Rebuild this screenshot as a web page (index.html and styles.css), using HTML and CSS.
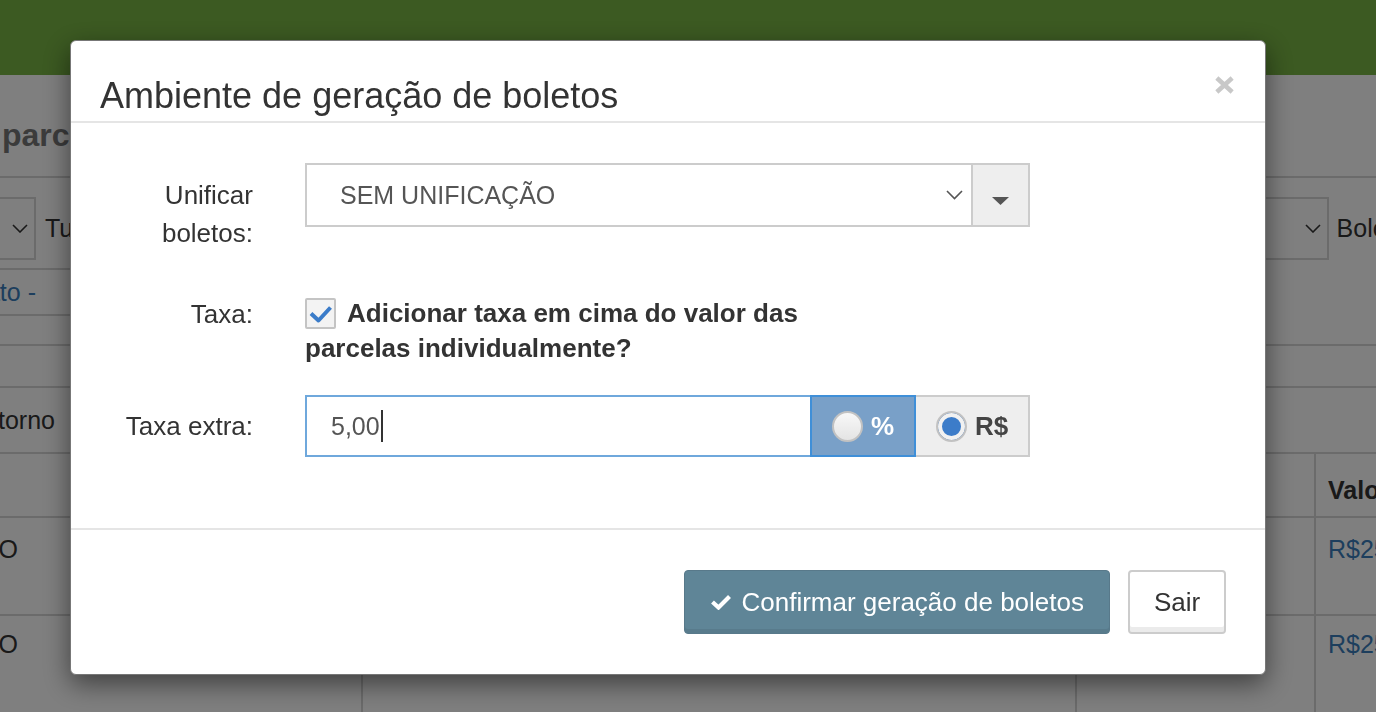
FILE: index.html
```html
<!DOCTYPE html>
<html lang="pt-BR">
<head>
    <meta charset="UTF-8">
    <meta name="viewport" content="width=device-width, initial-scale=1.0">
    <title>Boletos</title>
    <link rel="stylesheet" href="styles.css">
</head>
<body>
    <div class="page">
        <div class="topbar"></div>
        <h2 class="page-title">parcelas do contrato</h2>

        <div class="filters">
            <div class="filter-group first">
                <div class="filter-select">
                    <svg width="16" height="9" viewBox="0 0 16 9"><polyline points="1,1 8,8 15,1" fill="none" stroke="#333" stroke-width="1.6"/></svg>
                </div>
                <span>Tudo</span>
            </div>
            <div class="filter-group last">
                <div class="filter-select wide">
                    <svg width="16" height="9" viewBox="0 0 16 9"><polyline points="1,1 8,8 15,1" fill="none" stroke="#333" stroke-width="1.6"/></svg>
                </div>
                <span>Boletos</span>
            </div>
        </div>

        <div class="links">
            <div class="cut cut-link"><a class="link" href="#">Ver contrato -</a></div>
        </div>
        <div class="band"></div>
        <div class="band-row">
            <div class="cut cut-retorno">Retorno</div>
        </div>

        <div class="table">
            <div class="cell head"></div>
            <div class="cell head"></div>
            <div class="cell head"></div>
            <div class="cell head last">Valor</div>

            <div class="cell row-1"><div class="cut cut-status">ABERTO</div></div>
            <div class="cell row-1"></div>
            <div class="cell row-1"></div>
            <div class="cell row-1 last money">R$250,00</div>

            <div class="cell row-2"><div class="cut cut-status">ABERTO</div></div>
            <div class="cell row-2"></div>
            <div class="cell row-2"></div>
            <div class="cell row-2 last money">R$250,00</div>
        </div>
    </div>

    <div class="backdrop"></div>

    <div class="modal">
        <div class="modal-header">
            <h4 class="modal-title">Ambiente de geração de boletos</h4>
            <span class="close">
                <svg width="19" height="18" viewBox="0 0 19 18"><path d="M3.5 3.5 L15.5 14.5 M15.5 3.5 L3.5 14.5" stroke="#c8c8c8" stroke-width="4.5" stroke-linecap="square"/></svg>
            </span>
        </div>

        <div class="modal-body">
            <div class="form-row row-unificar">
                <label class="form-label">Unificar boletos:</label>
                <div class="select-group">
                    <div class="select">
                        <span>SEM UNIFICAÇÃO</span>
                        <svg width="17" height="10" viewBox="0 0 17 10"><polyline points="1,1 8.5,8.5 16,1" fill="none" stroke="#555" stroke-width="1.6"/></svg>
                    </div>
                    <div class="select-addon">
                        <svg width="17" height="8" viewBox="0 0 17 8"><polygon points="0,0 17,0 8.5,8" fill="#555"/></svg>
                    </div>
                </div>
            </div>

            <div class="form-row row-taxa">
                <label class="form-label">Taxa:</label>
                <label class="check-label"><span class="check-box"><svg width="27" height="27" viewBox="0 0 27 27"><polyline points="4,13.5 11.5,20.5 23.5,7.5" fill="none" stroke="#3b7cc9" stroke-width="4" stroke-linejoin="round"/></svg></span>Adicionar taxa em cima do valor das parcelas individualmente?</label>
            </div>

            <div class="form-row row-extra">
                <label class="form-label">Taxa extra:</label>
                <div class="input-group">
                    <div class="input">5,00<span class="text-caret"></span></div>
                    <div class="addon addon-active"><span class="radio"></span>%</div>
                    <div class="addon addon-plain"><span class="radio checked"></span>R$</div>
                </div>
            </div>
        </div>

        <div class="modal-footer">
            <button class="btn btn-confirm">
                <svg width="20" height="15" viewBox="0 0 20 15"><polyline points="1.5,7 7.5,12.5 18.5,1.5" fill="none" stroke="#fff" stroke-width="4.2"/></svg>
                Confirmar geração de boletos
            </button>
            <button class="btn btn-exit">Sair</button>
        </div>
    </div>
</body>
</html>
```

FILE: styles.css
```css
* {
    margin: 0;
    padding: 0;
    box-sizing: border-box;
}
body {
    font-family: "Liberation Sans", Arial, sans-serif;
    font-size: 25px;
    color: #333;
    width: 1376px;
    height: 712px;
    overflow: hidden;
}

/* page behind the modal */
.page {
    height: 712px;
    background: #fff;
}
.topbar {
    height: 75px;
    background: #78b444;
}
.page-title {
    height: 103px;
    padding: 41px 0 0 2px;
    font-size: 32px;
    line-height: 38px;
    color: #777;
    white-space: nowrap;
    border-bottom: 2px solid #d6d6d6;
}
.filters {
    display: flex;
    justify-content: space-between;
    align-items: center;
    height: 63px;
    margin-top: 19px;
}
.filter-group {
    display: flex;
    align-items: center;
    gap: 9px;
    height: 100%;
}
.filter-group.first {
    margin-left: -24px;
}
.filter-group.last {
    gap: 8px;
    margin-right: -44px;
}
.filter-select {
    display: flex;
    align-items: center;
    justify-content: flex-end;
    width: 60px;
    height: 100%;
    padding-right: 6px;
    border: 2px solid #d6d6d6;
}
.filter-select.wide {
    width: 220px;
}
.cut {
    display: flex;
    justify-content: flex-end;
    white-space: nowrap;
}
.cut-link { width: 36px; }
.cut-retorno { width: 55px; }
.cut-status { width: 18px; }
.links {
    width: 360px;
    height: 48px;
    margin-top: 8px;
    padding-top: 5px;
    line-height: 34px;
    border-top: 2px solid #d6d6d6;
    border-bottom: 2px solid #d6d6d6;
}
.link {
    color: #3a7cba;
    text-decoration: none;
}
.band {
    height: 44px;
    margin-top: 28px;
    border-top: 2px solid #d6d6d6;
    border-bottom: 2px solid #d6d6d6;
}
.band-row {
    height: 66px;
    padding-top: 15px;
    line-height: 34px;
    border-bottom: 2px solid #d6d6d6;
}
.table {
    display: grid;
    grid-template-columns: 363px 714px 239px 1fr;
    line-height: 34px;
}
.cell {
    border-right: 2px solid #d6d6d6;
    border-bottom: 2px solid #d6d6d6;
    white-space: nowrap;
}
.cell.last {
    border-right: none;
    padding-left: 12px;
}
.head {
    height: 64px;
    padding-top: 19px;
    font-weight: bold;
}
.row-1 {
    height: 98px;
    padding-top: 14px;
}
.row-2 {
    height: 98px;
    padding-top: 11px;
}
.money {
    color: #3a7cba;
}

/* modal */
.backdrop {
    position: fixed;
    inset: 0;
    background: rgba(0, 0, 0, 0.5);
}
.modal {
    position: fixed;
    top: 40px;
    left: 70px;
    width: 1196px;
    background: #fff;
    border: 1px solid #777;
    border-radius: 6px;
    box-shadow: 0 9px 27px rgba(0, 0, 0, 0.5);
}
.modal-header {
    display: flex;
    justify-content: space-between;
    align-items: flex-start;
    padding: 35px 31px 5px 29px;
    border-bottom: 2px solid #e5e5e5;
}
.modal-title {
    font-size: 36px;
    line-height: 40px;
    font-weight: normal;
    color: #333;
}
.close svg {
    display: block;
    overflow: visible;
}
.modal-body {
    padding: 40px 30px 71px 29px;
}
.form-row {
    display: grid;
    grid-template-columns: 153px 725px;
    column-gap: 52px;
}
.row-taxa {
    margin-top: 43px;
}
.row-extra {
    margin-top: 29px;
}
.form-label {
    font-size: 26px;
    line-height: 38px;
    text-align: right;
}
.row-unificar .form-label {
    padding-top: 13px;
}
.row-extra .form-label {
    padding-top: 12px;
}
.select-group {
    display: flex;
    height: 64px;
}
.select {
    display: flex;
    align-items: center;
    justify-content: space-between;
    flex: 1;
    padding: 0 8px 0 33px;
    color: #555;
    border: 2px solid #ccc;
    border-right: none;
}
.select-addon {
    display: flex;
    align-items: center;
    justify-content: center;
    width: 59px;
    background: #eee;
    border: 2px solid #ccc;
}
.select-addon svg {
    margin-top: 12px;
}
.check-label {
    display: block;
    width: 505px;
    padding-top: 1px;
    font-size: 26px;
    font-weight: bold;
    line-height: 35px;
}
.check-box {
    display: inline-block;
    width: 31px;
    height: 31px;
    margin-right: 11px;
    vertical-align: -7px;
    background: #f3f3f3;
    border: 2px solid #c4c4c4;
    border-radius: 2px;
}
.check-box svg {
    display: block;
}
.input-group {
    display: flex;
    height: 62px;
}
.input {
    display: flex;
    align-items: center;
    width: 505px;
    padding-left: 24px;
    color: #555;
    border: 2px solid #6fa8dc;
    border-right: none;
}
.text-caret {
    width: 2px;
    height: 32px;
    margin-left: 1px;
    background: #333;
}
.addon {
    display: flex;
    align-items: center;
    justify-content: center;
    gap: 8px;
    font-size: 26px;
    font-weight: bold;
}
.addon-active {
    width: 106px;
    background: #79a0c8;
    border: 2px solid #3f8fd8;
    color: #fff;
}
.addon-plain {
    width: 114px;
    background: #eee;
    border: 2px solid #ccc;
    border-left: none;
    color: #444;
}
.radio {
    width: 31px;
    height: 31px;
    border-radius: 50%;
    border: 2px solid #c2c2c2;
    background: linear-gradient(#f8f8f8, #e4e4e4);
}
.radio.checked {
    background: #3c7cc9;
    box-shadow: inset 0 0 0 4px #f1f1f1;
}
.modal-footer {
    display: flex;
    justify-content: flex-end;
    gap: 18px;
    padding: 40px 39px 40px 40px;
    border-top: 2px solid #e5e5e5;
}
.btn {
    display: flex;
    align-items: center;
    justify-content: center;
    height: 64px;
    font-family: inherit;
    font-size: 26px;
    border-radius: 4px;
    cursor: pointer;
}
.btn-confirm {
    gap: 10px;
    padding: 0 25px 0 26px;
    background: #5f8597;
    border: 1px solid #58798a;
    color: #fff;
    box-shadow: inset 0 -4px 0 rgba(0, 0, 0, 0.07);
}
.btn-exit {
    width: 98px;
    background: #fff;
    border: 2px solid #ccc;
    color: #333;
    box-shadow: inset 0 -5px 0 #ebebeb;
}
```
